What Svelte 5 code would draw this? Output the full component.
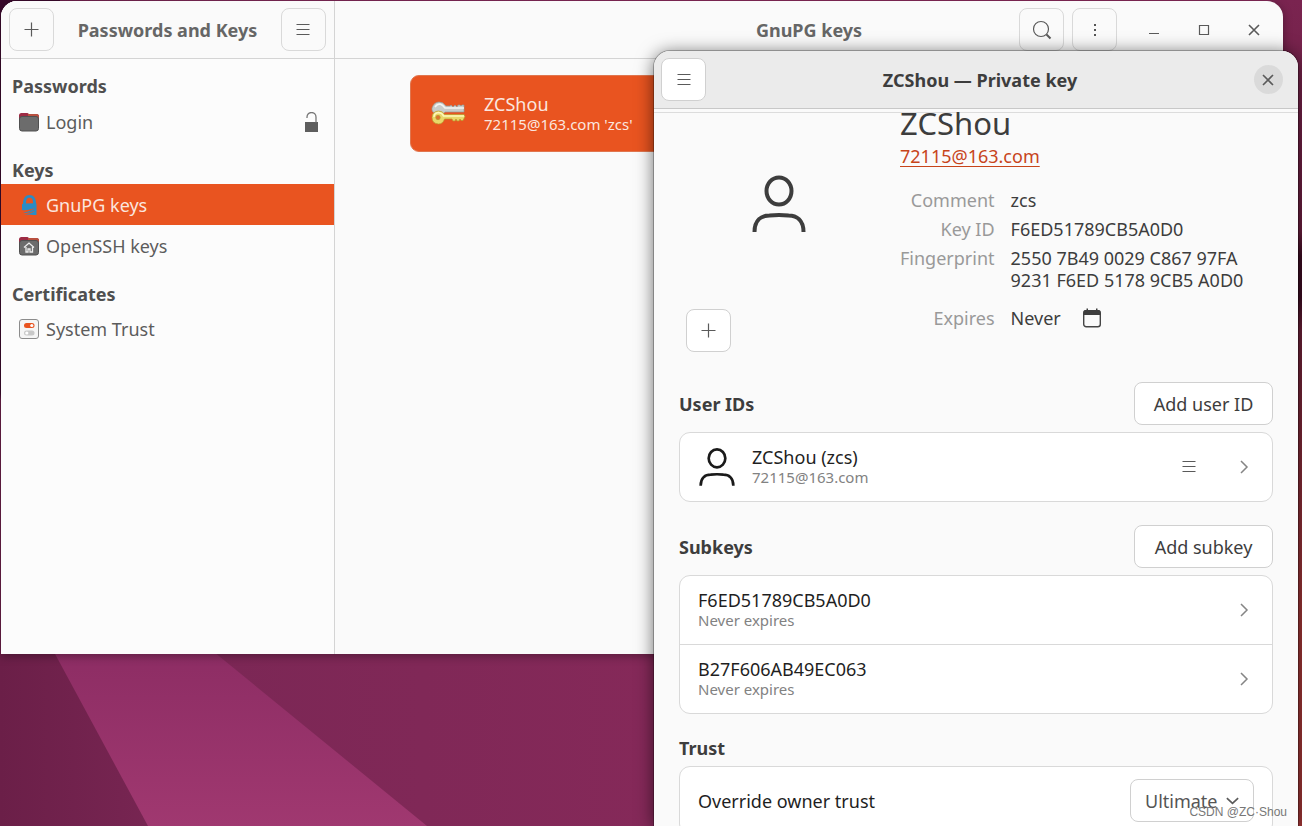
<script>
  const groups = [
    { title: 'Passwords', items: [{ label: 'Login', icon: 'folder', unlocked: true }] },
    {
      title: 'Keys',
      items: [
        { label: 'GnuPG keys', icon: 'gnupg' },
        { label: 'OpenSSH keys', icon: 'home' },
      ],
    },
    { title: 'Certificates', items: [{ label: 'System Trust', icon: 'trust' }] },
  ];

  const details = [
    { label: 'Comment', value: 'zcs' },
    { label: 'Key ID', value: 'F6ED51789CB5A0D0' },
    { label: 'Fingerprint', value: '2550 7B49 0029 C867 97FA\n9231 F6ED 5178 9CB5 A0D0' },
  ];

  const subkeys = [
    { id: 'F6ED51789CB5A0D0', expires: 'Never expires' },
    { id: 'B27F606AB49EC063', expires: 'Never expires' },
  ];

  let selected = $state('GnuPG keys');
  let trust = $state('Ultimate');
</script>

{#snippet burger()}
  <svg class="glyph" viewBox="0 0 16 16" aria-hidden="true">
    <path d="M1.500 2.500h13M1.500 7.500h13M1.500 12.500h13" />
  </svg>
{/snippet}

{#snippet plus()}
  <svg class="glyph" viewBox="0 0 16 16" aria-hidden="true">
    <path d="M0.500 7.500h14M7.500 0.500v14" />
  </svg>
{/snippet}

{#snippet close()}
  <svg class="glyph" viewBox="0 0 16 16" aria-hidden="true">
    <path d="M3 3l10 10M13 3L3 13" stroke-width="1.600" />
  </svg>
{/snippet}

{#snippet chevron()}
  <svg class="glyph chevron" viewBox="0 0 16 16" aria-hidden="true">
    <path d="M4 2l6 6-6 6" stroke-width="1.500" />
  </svg>
{/snippet}

{#snippet person(size)}
  <svg class="person {size}" viewBox="0 0 56 60" aria-hidden="true">
    <ellipse cx="28" cy="17" rx="12.500" ry="13.500" />
    <path d="M3.500 58c0-12 7-16.500 15-16.500q9.500-1.200 19 0c8 0 15 4.500 15 16.500" />
  </svg>
{/snippet}

{#snippet placeIcon(name)}
  <svg class="place-icon" viewBox="0 0 20 20" aria-hidden="true">
    {#if name === 'gnupg'}
      <path d="M4 9C4 3 6.500 0 10.500 0S17 3 17 9" fill="#2b8cc4" />
      <path d="M7 8.500C7 4.500 8 2.800 10.500 2.800S14 4.500 14 8.500z" fill="#e95420" />
      <path d="M3 9l14.500-0.500V20H14c-2-0.300-5 0-9-1 4 0 6-0.500 8-2-3 1-6 1-9 0.500 4-0.500 7-1.500 10-4-4 1.500-7 2-11 1.500z" fill="#2b8cc4" />
      <path d="M6 16.200c4-0.200 7-1.200 9.500-3M8 18.200c3-0.200 5-1 7-2" fill="none" stroke="#e95420" stroke-width="0.700" />
    {:else if name === 'trust'}
      <rect x="0.500" y="0.500" width="19" height="19" rx="2.500" fill="#f5f5f5" stroke="#8c8c8c" />
      <rect x="5" y="4" width="10.500" height="5" rx="2.500" fill="#e95420" />
      <circle cx="12.800" cy="6.500" r="1.600" fill="#fff" />
      <rect x="5" y="11.500" width="10.500" height="5" rx="2.500" fill="#c8c8c8" />
      <circle cx="7.800" cy="14" r="1.600" fill="#fff" />
    {:else}
      <path d="M0 3.500Q0 1 2.500 1h6l1.500 1h7.500Q20 2 20 4.500V9H0z" fill="#9d2b44" />
      <path d="M9 2h8.500Q20 2 20 4.500V7H9z" fill="#b8503f" />
      <rect x="0.500" y="4.500" width="19" height="14.500" rx="2.500" fill="#6c6c6c" stroke="#505050" />
      {#if name === 'home'}
        <path d="M5 11.500l5-4.500 5 4.500M7 11v5h2v-3h2v3h2.500v-5" fill="none" stroke="#ececec" stroke-width="1.300" />
      {/if}
    {/if}
  </svg>
{/snippet}

<div class="desktop">
  <svg class="wallpaper" viewBox="0 0 1302 826" preserveAspectRatio="none" aria-hidden="true">
    <defs>
      <linearGradient id="base" x1="0" x2="1" y1="0" y2="0">
        <stop offset="0" stop-color="#6b1f48" />
        <stop offset="0.150" stop-color="#7b2755" />
        <stop offset="0.500" stop-color="#852959" />
        <stop offset="1" stop-color="#852959" />
      </linearGradient>
      <linearGradient id="beam" x1="0" x2="0" y1="0" y2="1">
        <stop offset="0" stop-color="#8d2d64" />
        <stop offset="1" stop-color="#a03870" />
      </linearGradient>
      <linearGradient id="edge" x1="0" x2="0" y1="0" y2="1">
        <stop offset="0" stop-color="#7a2450" />
        <stop offset="0.280" stop-color="#6a1e3e" />
        <stop offset="0.310" stop-color="#3c0c22" />
        <stop offset="0.360" stop-color="#3c0c22" />
        <stop offset="0.400" stop-color="#6b2038" />
        <stop offset="0.750" stop-color="#a03636" />
        <stop offset="1" stop-color="#a03636" />
      </linearGradient>
    </defs>
    <rect width="1302" height="826" fill="url(#base)" />
    <path d="M0 0h60L0 400z" fill="#3a0a2c" />
    <path d="M54 652h160L427 826H148z" fill="url(#beam)" />
    <rect x="1270" width="32" height="826" fill="url(#edge)" />
  </svg>

  <section class="window main-window" aria-label="Passwords and Keys">
    <aside class="sidebar">
      <header class="bar side-bar">
        <button class="icon-button" aria-label="Add">{@render plus()}</button>
        <h1>Passwords and Keys</h1>
        <button class="icon-button" aria-label="Menu">{@render burger()}</button>
      </header>
      <nav>
        {#each groups as group}
          <h2>{group.title}</h2>
          {#each group.items as item}
            <button
              class="place"
              class:selected={selected === item.label}
              onclick={() => (selected = item.label)}
            >
              {@render placeIcon(item.icon)}
              <span>{item.label}</span>
              {#if item.unlocked}
                <svg class="lock" viewBox="0 0 14 20" aria-hidden="true">
                  <rect x="0" y="10" width="13" height="10" fill="#5e5e5e" />
                  <path d="M2 6V5a4.500 4.500 0 0 1 9 0v5.500" fill="none" stroke="#777" stroke-width="1.300" />
                </svg>
              {/if}
            </button>
          {/each}
        {/each}
      </nav>
    </aside>

    <main class="keys">
      <header class="bar keys-bar">
        <h1>GnuPG keys</h1>
        <div class="controls">
          <button class="icon-button" aria-label="Search">
            <svg class="glyph search" viewBox="0 0 20 20" aria-hidden="true">
              <circle cx="9" cy="9" r="7.500" />
              <path d="M14.500 14.500l4 4" stroke-width="2" />
            </svg>
          </button>
          <button class="icon-button" aria-label="View options">
            <svg class="glyph" viewBox="0 0 16 16" aria-hidden="true">
              <path d="M7 2h2v2H7zM7 7h2v2H7zM7 12h2v2H7z" fill="#555" stroke="none" />
            </svg>
          </button>
          <button class="window-button" aria-label="Minimize">
            <svg class="glyph" viewBox="0 0 16 16" aria-hidden="true"><path d="M3 11.500h10" /></svg>
          </button>
          <button class="window-button" aria-label="Maximize">
            <svg class="glyph" viewBox="0 0 16 16" aria-hidden="true"><path d="M3.500 3.500h9v9h-9z" /></svg>
          </button>
          <button class="window-button" aria-label="Close">{@render close()}</button>
        </div>
      </header>
      <button class="key-row">
        <svg class="keyring" viewBox="0 0 36 28" aria-hidden="true">
          <path
            d="M1 8Q3 2 8 2q4 0 6 3l1 1h4l1-1 2 2 2-2 2 2 1-2h2l1 1 1-1h2v7H14q-3 4-9 2-4-2-4-4z"
            fill="#c9ccca"
            stroke="#959a96"
            stroke-width="0.700"
          />
          <path d="M4 7q2-3 5-3 3 1 5 4h19" fill="none" stroke="#f3f4f3" stroke-width="1.500" />
          <path
            d="M7.500 11q4.500 0 6 3.500H33l1 2-2 4h-2l-1-1.500-1 2h-2l-1-2-1 2h-2l-1-2h-7.500Q12 24 7.500 24 1 23.500 1 17.500T7.500 11z"
            fill="#e9d86a"
            stroke="#b99a2c"
            stroke-width="0.700"
          />
          <path d="M3 17q0-4 4.500-4.500 4 0.500 5 3.500H33" fill="none" stroke="#fdf7ba" stroke-width="1.500" />
          <circle cx="7" cy="17.500" r="2.200" fill="#dd7430" stroke="#b99a2c" stroke-width="0.700" />
        </svg>
        <span class="row-text">
          <span>ZCShou</span>
          <small>72115@163.com 'zcs'</small>
        </span>
      </button>
    </main>
  </section>

  <section class="window dialog" aria-label="ZCShou — Private key">
    <header class="bar dialog-bar">
      <button class="icon-button" aria-label="Menu">{@render burger()}</button>
      <h1>ZCShou — Private key</h1>
      <button class="round-button" aria-label="Close">{@render close()}</button>
    </header>

    <div class="dialog-body">
      <div class="profile">
        <div class="photo">
          {@render person('large')}
          <button class="icon-button" aria-label="Add photo">{@render plus()}</button>
        </div>
        <div class="identity">
          <h2 class="owner">ZCShou</h2>
          <a href="mailto:72115@163.com">72115@163.com</a>
          <dl>
            {#each details as row}
              <dt>{row.label}</dt>
              <dd>{row.value}</dd>
            {/each}
            <dt class="expires">Expires</dt>
            <dd class="expires">
              Never
              <button class="calendar" aria-label="Change expiry date">
                <svg viewBox="0 0 18 20" aria-hidden="true">
                  <rect x="0.700" y="2.700" width="16.600" height="16" rx="2.500" fill="none" stroke="#454545" stroke-width="1.400" />
                  <path d="M0.500 7V4q0-2 2-2h1V0.500h1.500V2h8V0.500h1.500V2h1q2 0 2 2v3z" fill="#3d3d3d" />
                </svg>
              </button>
            </dd>
          </dl>
        </div>
      </div>

      <div class="section-head">
        <h2>User IDs</h2>
        <button class="text-button">Add user ID</button>
      </div>
      <ul class="list">
        <li>
          {@render person('small')}
          <span class="row-text">
            <span>ZCShou (zcs)</span>
            <small>72115@163.com</small>
          </span>
          <button class="flat-button" aria-label="User ID menu">{@render burger()}</button>
          <button class="flat-button" aria-label="Open user ID">{@render chevron()}</button>
        </li>
      </ul>

      <div class="section-head">
        <h2>Subkeys</h2>
        <button class="text-button">Add subkey</button>
      </div>
      <ul class="list">
        {#each subkeys as key}
          <li>
            <span class="row-text">
              <span>{key.id}</span>
              <small>{key.expires}</small>
            </span>
            <button class="flat-button" aria-label="Open subkey">{@render chevron()}</button>
          </li>
        {/each}
      </ul>

      <div class="section-head">
        <h2>Trust</h2>
      </div>
      <div class="list trust-row">
        <label for="owner-trust">Override owner trust</label>
        <span class="select-wrap">
          <select id="owner-trust" bind:value={trust}>
            <option>Unknown</option>
            <option>Never</option>
            <option>Marginal</option>
            <option>Full</option>
            <option>Ultimate</option>
          </select>
          <svg class="glyph arrow" viewBox="0 0 16 16" aria-hidden="true">
            <path d="M2 5l6 5.500L14 5" stroke-width="1.800" />
          </svg>
        </span>
      </div>
    </div>
  </section>

  <span class="watermark">CSDN @ZC·Shou</span>
</div>

<style>
  :global(body) {
    margin: 0;
    overflow: hidden;
  }

  .desktop {
    position: relative;
    height: 100vh;
    overflow: hidden;
    color: #3d3d3d;
    font-family: 'Noto Sans', 'Open Sans', sans-serif;
    font-size: 18px;
    line-height: 22px;
  }

  .desktop * {
    box-sizing: border-box;
  }

  .wallpaper {
    position: absolute;
    inset: 0;
    width: 100%;
    height: 100%;
  }

  button,
  select {
    margin: 0;
    padding: 0;
    border: 0;
    background: none;
    color: inherit;
    font: inherit;
  }

  h1,
  h2 {
    margin: 0;
    font-size: 18px;
    font-weight: 700;
  }

  .window {
    position: absolute;
    display: flex;
    overflow: hidden;
    background: #fafafa;
  }

  .main-window {
    inset: 1px 19px 172px 1px;
    border-radius: 16px 16px 0 0;
    box-shadow: 0 2px 10px rgba(0, 0, 0, 0.35);
    color: #555;
  }

  .bar {
    display: flex;
    flex: none;
    align-items: center;
    justify-content: space-between;
    height: 58px;
    padding: 0 8px;
    border-bottom: 1px solid #d4d4d4;
  }

  .bar h1 {
    color: #666;
  }

  .sidebar {
    flex: none;
    width: 334px;
    border-right: 1px solid #d4d4d4;
    background: #fcfcfc;
  }

  .side-bar {
    background: #fafafa;
  }

  .icon-button {
    display: grid;
    flex: none;
    place-items: center;
    width: 45px;
    height: 43px;
    border: 1px solid #d9d9d9;
    border-radius: 8px;
  }

  .glyph {
    display: block;
    width: 16px;
    height: 16px;
    fill: none;
    stroke: #5a5a5a;
    stroke-width: 1.2;
  }

  .search {
    width: 20px;
    height: 20px;
  }

  nav {
    padding-top: 8px;
  }

  nav h2 {
    padding: 17px 11px 3px;
    color: #4f4f4f;
  }

  nav h2:first-child {
    padding: 8px 11px 4px;
  }

  .place {
    display: flex;
    align-items: center;
    gap: 7px;
    width: 100%;
    height: 41px;
    padding: 0 15px 0 18px;
    color: #5c5c5c;
  }

  .place.selected {
    background: #e95420;
    color: #fbe6df;
  }

  .place-icon {
    width: 20px;
    height: 20px;
  }

  .lock {
    width: 14px;
    height: 20px;
    margin-left: auto;
  }

  .keys {
    flex: 1;
  }

  .keys-bar {
    display: grid;
    grid-template-columns: 1fr auto 1fr;
  }

  .keys-bar h1 {
    grid-column: 2;
  }

  .controls {
    display: flex;
    justify-content: flex-end;
    gap: 8px;
  }

  .window-button {
    display: grid;
    place-items: center;
    width: 42px;
  }

  .icon-button + .window-button {
    margin-left: 8px;
  }

  .key-row {
    display: flex;
    align-items: center;
    gap: 17px;
    width: calc(100% - 150px);
    height: 77px;
    margin: 16px 75px;
    padding: 0 20px;
    border: 1px solid #e0764f;
    border-radius: 9px;
    background: #e95420;
    color: #fbe6df;
    text-align: left;
  }

  .keyring {
    width: 36px;
    height: 28px;
  }

  .row-text {
    display: flex;
    flex-direction: column;
    line-height: 20px;
  }

  .row-text small {
    font-size: 15px;
  }

  .dialog {
    top: 51px;
    right: 4px;
    bottom: 0;
    flex-direction: column;
    width: 644px;
    border-radius: 16px 16px 0 0;
    box-shadow: 0 0 0 1px rgba(0, 0, 0, 0.25), 0 2px 18px rgba(0, 0, 0, 0.6);
  }

  .dialog-bar {
    padding: 0 15px 0 7px;
    border-color: #c8c8c8;
    background: #ebebeb;
  }

  .dialog-bar h1 {
    color: #3d3d3d;
  }

  .dialog .icon-button,
  .text-button {
    border: 1px solid #d0d0d0;
    background: #fff;
  }

  .round-button {
    display: grid;
    place-items: center;
    width: 29px;
    height: 29px;
    border-radius: 50%;
    background: #dadada;
  }

  .dialog-body {
    flex: 1;
    min-height: 0;
    margin-top: 3px;
    padding: 0 25px;
    border-top: 1px solid #dcdcdc;
  }

  .profile {
    display: flex;
    gap: 69px;
    padding-left: 7px;
  }

  .photo {
    display: flex;
    flex-direction: column;
    justify-content: space-between;
    width: 145px;
    padding: 61px 0 7px;
  }

  .person {
    fill: none;
    stroke: #3d3d3d;
    stroke-width: 4;
  }

  .large {
    align-self: flex-end;
    width: 56px;
    height: 60px;
    margin-right: 24px;
  }

  .small {
    width: 38px;
    height: 40px;
    stroke: #1a1a1a;
  }

  .identity {
    padding-bottom: 30px;
  }

  .owner {
    padding-bottom: 12px;
    font-size: 31px;
    font-weight: 400;
    line-height: 20px;
  }

  a {
    color: #c7441a;
    text-underline-offset: 3px;
  }

  dl {
    display: grid;
    grid-template-columns: auto auto;
    gap: 7px 16px;
    margin: 22px 0 0;
  }

  dt {
    color: #999;
    text-align: right;
  }

  dd {
    margin: 0;
    white-space: pre-line;
  }

  .expires {
    margin-top: 9px;
  }

  dd.expires {
    display: flex;
    gap: 22px;
  }

  .calendar svg {
    display: block;
    width: 18px;
    height: 20px;
  }

  .section-head {
    display: flex;
    align-items: center;
    justify-content: space-between;
    margin-top: 23px;
    padding-bottom: 7px;
  }

  .text-button {
    width: 139px;
    height: 43px;
    border-radius: 8px;
  }

  .list {
    margin: 0;
    padding: 0;
    border: 1px solid #d9d9d9;
    border-radius: 11px;
    background: #fff;
    color: #1f1f1f;
    list-style: none;
  }

  li {
    display: flex;
    align-items: center;
    height: 68px;
    padding: 0 19px 0 18px;
  }

  li + li {
    border-top: 1px solid #d9d9d9;
    height: 69px;
  }

  li .row-text {
    flex: 1;
  }

  li .person + .row-text {
    margin-left: 16px;
  }

  .list small {
    color: #828282;
  }

  .flat-button {
    margin-left: 40px;
  }

  .chevron {
    stroke: #858585;
  }

  .trust-row {
    display: flex;
    align-items: center;
    justify-content: space-between;
    height: 69px;
    padding: 0 18px;
  }

  .select-wrap {
    position: relative;
    color: #555;
  }

  select {
    appearance: none;
    width: 124px;
    height: 43px;
    padding: 0 14px;
    border: 1px solid #d0d0d0;
    border-radius: 8px;
    background: #fff;
  }

  .arrow {
    position: absolute;
    top: 14px;
    right: 14px;
    width: 15px;
    pointer-events: none;
  }

  .watermark {
    position: absolute;
    right: 15px;
    bottom: 6px;
    color: #777;
    font: 12px/16px 'Liberation Sans', sans-serif;
  }
</style>
